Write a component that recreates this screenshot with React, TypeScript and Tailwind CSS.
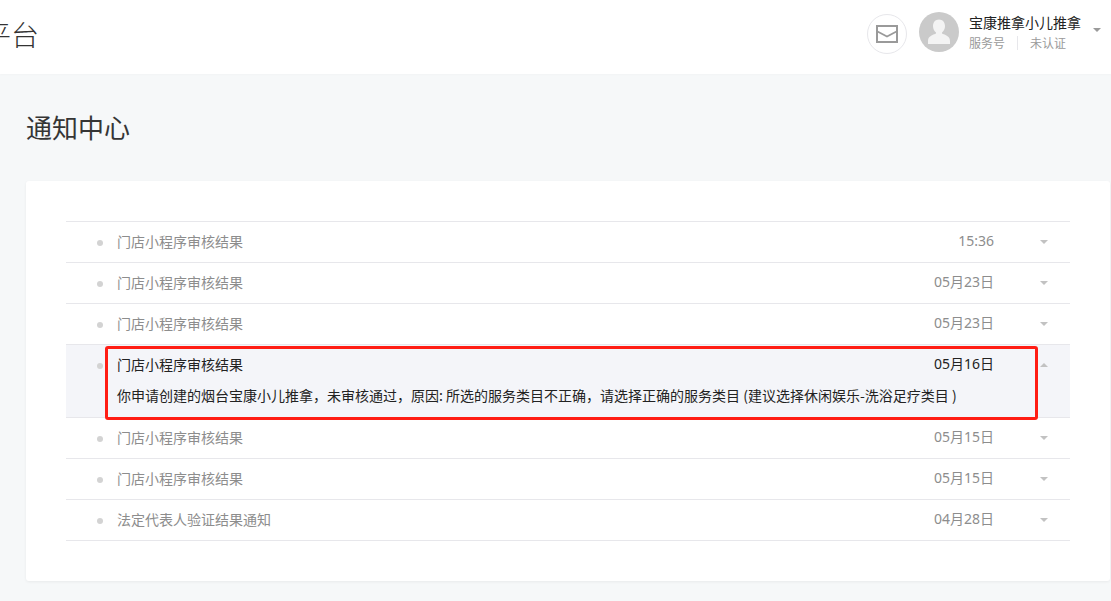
import { useState } from 'react';

type Notice = {
  id: number;
  title: string;
  time: string;
  content?: string;
};

const notices: Notice[] = [
  { id: 1, title: '门店小程序审核结果', time: '15:36' },
  { id: 2, title: '门店小程序审核结果', time: '05月23日' },
  { id: 3, title: '门店小程序审核结果', time: '05月23日' },
  {
    id: 4,
    title: '门店小程序审核结果',
    time: '05月16日',
    content:
      '你申请创建的烟台宝康小儿推拿，未审核通过，原因: 所选的服务类目不正确，请选择正确的服务类目 (建议选择休闲娱乐-洗浴足疗类目 )',
  },
  { id: 5, title: '门店小程序审核结果', time: '05月15日' },
  { id: 6, title: '门店小程序审核结果', time: '05月15日' },
  { id: 7, title: '法定代表人验证结果通知', time: '04月28日' },
];

function Caret({ up = false, className = '' }: { up?: boolean; className?: string }) {
  return (
    <svg viewBox="0 0 8 4" className={`w-2 h-1 shrink-0 ${className}`} fill="currentColor" aria-hidden="true">
      <path d={up ? 'M0 4h8L4 0z' : 'M0 0h8L4 4z'} />
    </svg>
  );
}

function Header() {
  return (
    <header className="flex justify-between h-[74px] bg-white shadow-[0_1px_2px_rgba(0,0,0,0.02)]">
      <a href="#" className="flex justify-end w-[39px] overflow-hidden pt-[14px] text-[28px] leading-10 font-light whitespace-nowrap text-[#333]">
        平台
      </a>

      <div className="flex items-start pr-[10px] pt-3">
        <button
          aria-label="通知"
          className="flex items-center justify-center w-10 h-10 mt-0.5 mr-3 rounded-full border border-[#e7e7eb] text-[#9a9a9a]"
        >
          <svg viewBox="0 0 22 18" className="w-[22px] h-[18px]" fill="none" stroke="currentColor" strokeWidth="2" aria-hidden="true">
            <path d="M1 1h20v16H1z" />
            <path d="M1.500 6.500L11 11.500l9.500-5" strokeWidth="1.700" />
          </svg>
        </button>

        <svg viewBox="0 0 40 40" className="w-10 h-10 mr-[10px]" aria-hidden="true">
          <circle cx="20" cy="20" r="20" fill="#cacaca" />
          <path
            d="M20 7.500c3.600 0 6 2.800 6 6.500 0 2.700-1.200 5.200-3 6.400v.6c0 .6.400.9 1 1.100 4.500 1.400 7 3.400 7 6.900v3H9v-3c0-3.500 2.500-5.500 7-6.900.6-.2 1-.5 1-1.100v-.6c-1.800-1.200-3-3.700-3-6.400 0-3.700 2.400-6.500 6-6.500z"
            fill="#f3f3f3"
          />
        </svg>

        <button className="flex items-start text-left">
          <span className="block">
            <span className="block mb-0.5 text-sm leading-5 text-[#222]">宝康推拿小儿推拿</span>
            <span className="flex items-center text-xs leading-[18px] text-[#9a9a9a]">
              <span className="pr-3">服务号</span>
              <span className="w-px h-[14px] bg-[#e7e7eb]" />
              <span className="pl-3">未认证</span>
            </span>
          </span>
          <Caret className="ml-3 mt-4 text-[#9a9a9a]" />
        </button>
      </div>
    </header>
  );
}

function NoticeItem({ notice, open, onToggle }: { notice: Notice; open: boolean; onToggle: () => void }) {
  return (
    <li className={`relative border-b border-[#e7e7eb] ${open ? 'bg-[#f4f5f9] text-[#222]' : 'text-[#8d8d8d]'}`}>
      <button
        onClick={onToggle}
        aria-expanded={open}
        className="flex items-center w-full h-10 pb-0.5 pl-[31px] pr-[22px] text-sm text-left"
      >
        <span className="w-1.5 h-1.5 mt-1 mr-[14px] rounded-full bg-[#d3d3d3]" />
        <span className="flex-1">{notice.title}</span>
        <span className="mr-[46px] font-['Noto_Sans','Noto_Sans_CJK_SC',sans-serif]">{notice.time}</span>
        <Caret up={open} className="mt-0.5 text-[#c2c2c2]" />
      </button>
      {open && notice.content && (
        <>
          <p className="pl-[51px] pr-20 pb-3 text-sm leading-5">{notice.content}</p>
          {/* 高亮框 */}
          <div className="absolute top-px -bottom-[3px] left-[39px] right-8 rounded-[3px] border-3 border-[#ff1d14] pointer-events-none" />
        </>
      )}
    </li>
  );
}

export default function App() {
  const [openId, setOpenId] = useState<number | null>(4);

  return (
    <div className="min-h-screen overflow-x-hidden bg-[#f6f8f9] font-['Noto_Sans_CJK_SC',sans-serif]">
      <Header />

      <main className="pl-[26px] pr-px pb-5">
        <h1 className="pt-[35px] pb-[37px] text-[26px] leading-[35px] text-[#353535]">通知中心</h1>

        <section className="p-10 rounded-[3px] bg-white shadow-[0_1px_3px_rgba(0,0,0,0.06)]">
          <ul className="border-t border-[#e7e7eb]">
            {notices.map((notice) => (
              <NoticeItem
                key={notice.id}
                notice={notice}
                open={openId === notice.id}
                onToggle={() => setOpenId(openId === notice.id ? null : notice.id)}
              />
            ))}
          </ul>
        </section>
      </main>
    </div>
  );
}
